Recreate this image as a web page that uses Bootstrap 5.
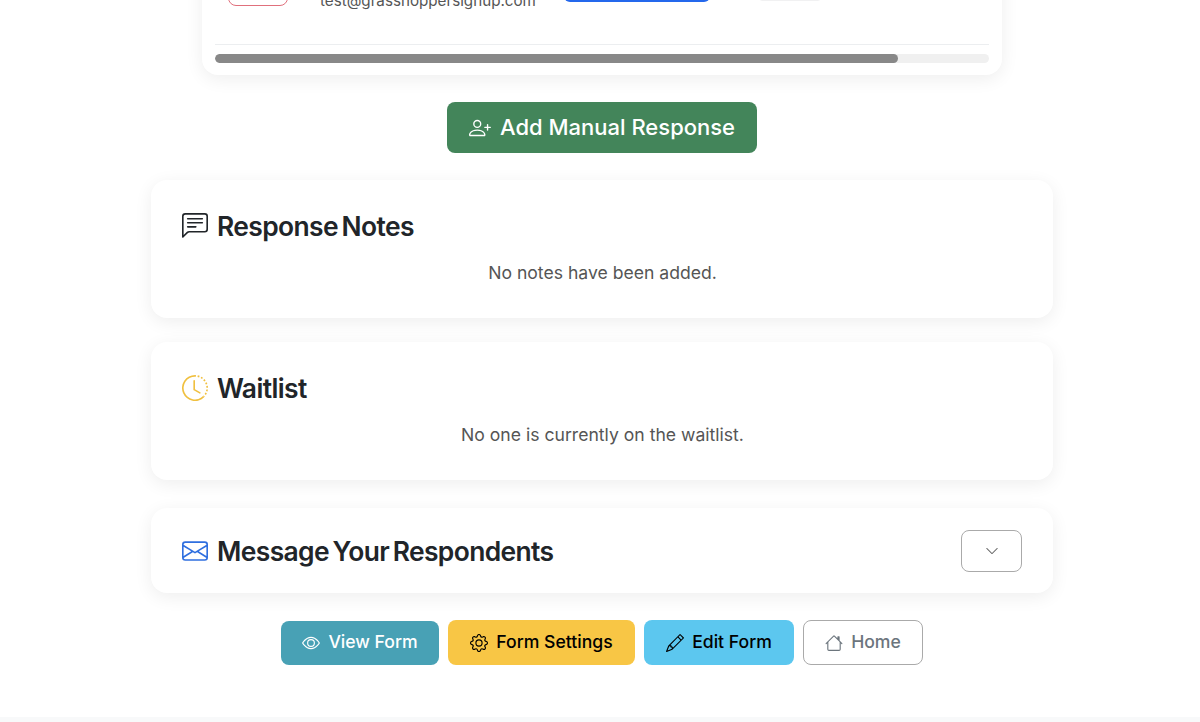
<!DOCTYPE html>
<html lang="en">
<head>
<meta charset="utf-8">
<title>Form responses</title>
<link href="https://cdn.jsdelivr.net/npm/bootstrap@5.3.0/dist/css/bootstrap.min.css" rel="stylesheet">
<style>
html,body{height:722px;overflow:hidden;background:#fff}
body{font-family:Inter,"Liberation Sans",sans-serif;color:#212529;padding-left:4px}
.page-wrap{width:902px;margin:0 auto;height:717px;display:flow-root}
.table-panel{width:800px;height:139px;margin:-64px auto 0;padding:0 13px 12px;border-radius:16px;background:#fff;box-shadow:0 4px 18px rgba(0,0,0,.07);overflow:hidden}
.row-cells{height:109px;border-bottom:1px solid #eceef0;padding:34px 0 0 13px}
.fake-action{width:60px;height:36px;border:1px solid #e0707c;border-radius:8px;flex:none}
.fake-mail{margin-left:32px;width:244px;font-size:15.2px;color:#555;line-height:62px;height:36px;white-space:nowrap}
.fake-pill{width:146px;height:32px;background:#2468ec;border-radius:6px;flex:none}
.fake-chip{width:66px;height:31px;background:#f1f1f2;border-radius:6px;margin-left:47px;flex:none}
.scroll-track{height:9px;margin-top:9px;background:#f0f0f0;border-radius:5px;overflow:hidden}
.scroll-thumb{height:100%;background:#888;border-radius:5px}
.add-btn{width:310px;height:51px;margin:27px auto;display:flex;align-items:center;justify-content:center;gap:9px;background:#43855a;border:0;border-radius:8px;color:#fff;font-size:22px;font-weight:500;padding:0}
.add-btn:hover{background:#43855a;color:#fff}
.info-panel{height:138px;padding:27px 30px 0 31px;margin-bottom:24px;border-radius:16px;background:#fff;box-shadow:0 4px 18px rgba(0,0,0,.07)}
.info-panel.wait-panel{margin-bottom:28px}
.info-panel.msg-panel{height:85px;padding:0 31px 0 31px;margin-bottom:27px}
.panel-title{font-family:Inter,sans-serif;font-size:26.4px;font-weight:600;letter-spacing:-.6px;word-spacing:-2.5px;line-height:38px;margin:0;color:#212529;gap:9px}
.panel-title svg{width:26px;height:26px;flex:none}
.panel-empty{margin:15px 0 0;text-align:center;font-size:17.6px;line-height:26px;color:#555}
.toggle-btn{width:61px;height:42px;padding:0;border:1px solid #aaa;border-radius:8px;background:#fff;color:#666;display:flex;align-items:center;justify-content:center}
.toggle-btn svg{width:14px;height:14px}
.foot-btns{gap:9px}
.act-btn{height:45px;display:flex;align-items:center;justify-content:center;gap:8px;border-radius:8px;font-size:17.6px;font-weight:500;padding:0;border:1px solid transparent}
.act-btn svg{width:18px;height:18px}
.act-view{width:158px;height:44px;align-self:center;background:#48a1b5;color:#fff}
.act-set{width:187px;background:#f8c645;color:#000}
.act-edit{width:150px;background:#5cc7ef;color:#000}
.act-home{width:120px;background:#fff;color:#6c757d;border-color:#aaa}
.page-foot{height:5px;background:#f8f9fa;margin-left:-4px}
</style>
</head>
<body>
<div class="page-wrap">
  <div class="table-panel">
    <div class="d-flex row-cells">
      <div class="fake-action"></div>
      <div class="fake-mail">test@grasshoppersignup.com</div>
      <div class="fake-pill"></div>
      <div class="fake-chip"></div>
    </div>
    <div class="scroll-track"><div class="scroll-thumb" style="width:88.2%"></div></div>
  </div>

  <button type="button" class="btn add-btn">
    <svg width="22" height="22" viewBox="0 0 16 16" fill="currentColor"><path d="M6 8a3 3 0 1 0 0-6 3 3 0 0 0 0 6zm2-3a2 2 0 1 1-4 0 2 2 0 0 1 4 0zm4 8c0 1-1 1-1 1H1s-1 0-1-1 1-4 6-4 6 3 6 4zm-1-.004c-.001-.246-.154-.986-.832-1.664C9.516 10.68 8.289 10 6 10c-2.29 0-3.516.68-4.168 1.332-.678.678-.83 1.418-.832 1.664h10z"/><path fill-rule="evenodd" d="M13.5 5a.5.5 0 0 1 .5.5V7h1.5a.5.5 0 0 1 0 1H14v1.5a.5.5 0 0 1-1 0V8h-1.5a.5.5 0 0 1 0-1H13V5.5a.5.5 0 0 1 .5-.5z"/></svg>
    Add Manual Response
  </button>

  <section class="info-panel">
    <h2 class="panel-title d-flex align-items-center">
      <svg viewBox="0 0 16 16" fill="#212529"><path d="M14 1a1 1 0 0 1 1 1v8a1 1 0 0 1-1 1H4.414A2 2 0 0 0 3 11.586l-2 2V2a1 1 0 0 1 1-1h12zM2 0a2 2 0 0 0-2 2v12.793a.5.5 0 0 0 .854.353l2.853-2.853A1 1 0 0 1 4.414 12H14a2 2 0 0 0 2-2V2a2 2 0 0 0-2-2H2z"/><path d="M3 3.5a.5.5 0 0 1 .5-.5h9a.5.5 0 0 1 0 1h-9a.5.5 0 0 1-.5-.5zM3 6a.5.5 0 0 1 .5-.5h9a.5.5 0 0 1 0 1h-9A.5.5 0 0 1 3 6zm0 2.5a.5.5 0 0 1 .5-.5h5a.5.5 0 0 1 0 1h-5a.5.5 0 0 1-.5-.5z"/></svg>
      Response Notes
    </h2>
    <p class="panel-empty">No notes have been added.</p>
  </section>

  <section class="info-panel wait-panel">
    <h2 class="panel-title d-flex align-items-center">
      <svg viewBox="0 0 16 16" fill="#f0c040"><path d="M8.515 1.019A7 7 0 0 0 8 1V0a8 8 0 0 1 .589.022l-.074.997zm2.004.45a7.003 7.003 0 0 0-.985-.299l.219-.976c.383.086.76.2 1.126.342l-.36.933zm1.37.71a7.01 7.01 0 0 0-.439-.27l.493-.87a8.025 8.025 0 0 1 .979.654l-.615.789a6.996 6.996 0 0 0-.418-.302zm1.834 1.79a6.99 6.99 0 0 0-.653-.796l.724-.69c.27.285.52.59.747.91l-.818.576zm.744 1.352a7.08 7.08 0 0 0-.214-.468l.893-.45a7.976 7.976 0 0 1 .45 1.088l-.95.313a7.023 7.023 0 0 0-.179-.483zm.53 2.507a6.991 6.991 0 0 0-.1-1.025l.985-.17c.067.386.106.778.116 1.17l-1 .025zm-.131 1.538c.033-.17.06-.339.081-.51l.993.123a7.957 7.957 0 0 1-.23 1.155l-.964-.267c.046-.165.086-.332.12-.501zm-.952 2.379c.184-.29.346-.594.486-.908l.914.405c-.16.36-.345.706-.555 1.038l-.845-.535zm-.964 1.205c.122-.122.239-.248.35-.378l.758.653a8.073 8.073 0 0 1-.401.432l-.707-.707z"/><path d="M8 1a7 7 0 1 0 4.95 11.95l.707.707A8.001 8.001 0 1 1 8 0v1z"/><path d="M7.5 3a.5.5 0 0 1 .5.5v5.21l3.248 1.856a.5.5 0 0 1-.496.868l-3.5-2A.5.5 0 0 1 7 9V3.5a.5.5 0 0 1 .5-.5z"/></svg>
      Waitlist
    </h2>
    <p class="panel-empty">No one is currently on the waitlist.</p>
  </section>

  <section class="info-panel msg-panel d-flex justify-content-between align-items-center">
    <h2 class="panel-title d-flex align-items-center">
      <svg viewBox="0 0 16 16" fill="#2f6fdf"><path d="M0 4a2 2 0 0 1 2-2h12a2 2 0 0 1 2 2v8a2 2 0 0 1-2 2H2a2 2 0 0 1-2-2V4Zm2-1a1 1 0 0 0-1 1v.217l7 4.2 7-4.2V4a1 1 0 0 0-1-1H2Zm13 2.383-4.708 2.825L15 11.105V5.383Zm-.034 6.876-5.64-3.471L8 9.583l-1.326-.795-5.64 3.47A1 1 0 0 0 2 13h12a1 1 0 0 0 .966-.741ZM1 11.105l4.708-2.897L1 5.383v5.722Z"/></svg>
      Message Your Respondents
    </h2>
    <button type="button" class="btn toggle-btn" aria-label="Expand">
      <svg viewBox="0 0 16 16" fill="currentColor"><path fill-rule="evenodd" d="M1.646 4.646a.5.5 0 0 1 .708 0L8 10.293l5.646-5.647a.5.5 0 0 1 .708.708l-6 6a.5.5 0 0 1-.708 0l-6-6a.5.5 0 0 1 0-.708z"/></svg>
    </button>
  </section>

  <div class="d-flex justify-content-center foot-btns">
    <a href="#" class="btn act-btn act-view"><svg viewBox="0 0 16 16" fill="currentColor"><path d="M16 8s-3-5.5-8-5.5S0 8 0 8s3 5.5 8 5.5S16 8 16 8zM1.173 8a13.133 13.133 0 0 1 1.66-2.043C4.12 4.668 5.88 3.5 8 3.5c2.12 0 3.879 1.168 5.168 2.457A13.133 13.133 0 0 1 14.828 8c-.058.087-.122.183-.195.288-.335.48-.83 1.12-1.465 1.755C11.879 11.332 10.119 12.5 8 12.5c-2.12 0-3.879-1.168-5.168-2.457A13.134 13.134 0 0 1 1.172 8z"/><path d="M8 5.5a2.5 2.5 0 1 0 0 5 2.5 2.5 0 0 0 0-5zM4.5 8a3.5 3.5 0 1 1 7 0 3.5 3.5 0 0 1-7 0z"/></svg>View Form</a>
    <a href="#" class="btn act-btn act-set"><svg viewBox="0 0 16 16" fill="currentColor"><path d="M8 4.754a3.246 3.246 0 1 0 0 6.492 3.246 3.246 0 0 0 0-6.492zM5.754 8a2.246 2.246 0 1 1 4.492 0 2.246 2.246 0 0 1-4.492 0z"/><path d="M9.796 1.343c-.527-1.79-3.065-1.79-3.592 0l-.094.319a.873.873 0 0 1-1.255.52l-.292-.16c-1.64-.892-3.433.902-2.54 2.541l.159.292a.873.873 0 0 1-.52 1.255l-.319.094c-1.79.527-1.79 3.065 0 3.592l.319.094a.873.873 0 0 1 .52 1.255l-.16.292c-.892 1.64.901 3.434 2.541 2.54l.292-.159a.873.873 0 0 1 1.255.52l.094.319c.527 1.79 3.065 1.79 3.592 0l.094-.319a.873.873 0 0 1 1.255-.52l.292.16c1.64.893 3.434-.902 2.54-2.541l-.159-.292a.873.873 0 0 1 .52-1.255l.319-.094c1.79-.527 1.79-3.065 0-3.592l-.319-.094a.873.873 0 0 1-.52-1.255l.16-.292c.893-1.64-.902-3.433-2.541-2.54l-.292.159a.873.873 0 0 1-1.255-.52l-.094-.319zm-2.633.283c.246-.835 1.428-.835 1.674 0l.094.319a1.873 1.873 0 0 0 2.693 1.115l.291-.16c.764-.415 1.6.42 1.184 1.185l-.159.292a1.873 1.873 0 0 0 1.116 2.692l.318.094c.835.246.835 1.428 0 1.674l-.319.094a1.873 1.873 0 0 0-1.115 2.693l.16.291c.415.764-.42 1.6-1.185 1.184l-.291-.159a1.873 1.873 0 0 0-2.693 1.116l-.094.318c-.246.835-1.428.835-1.674 0l-.094-.319a1.873 1.873 0 0 0-2.692-1.115l-.292.16c-.764.415-1.6-.42-1.184-1.185l.159-.291A1.873 1.873 0 0 0 1.945 8.93l-.319-.094c-.835-.246-.835-1.428 0-1.674l.319-.094A1.873 1.873 0 0 0 3.06 4.377l-.16-.292c-.415-.764.42-1.6 1.185-1.184l.292.159a1.873 1.873 0 0 0 2.692-1.115l.094-.319z"/></svg>Form Settings</a>
    <a href="#" class="btn act-btn act-edit"><svg viewBox="0 0 16 16" fill="currentColor"><path d="M12.146.146a.5.5 0 0 1 .708 0l3 3a.5.5 0 0 1 0 .708l-10 10a.5.5 0 0 1-.168.11l-5 2a.5.5 0 0 1-.65-.65l2-5a.5.5 0 0 1 .11-.168l10-10zM11.207 2.5 13.5 4.793 14.793 3.5 12.5 1.207 11.207 2.5zm1.586 3L10.5 3.207 4 9.707V10h.5a.5.5 0 0 1 .5.5v.5h.5a.5.5 0 0 1 .5.5v.5h.293l6.5-6.5zm-9.761 5.175-.106.106-1.528 3.821 3.821-1.528.106-.106A.5.5 0 0 1 5 12.5V12h-.5a.5.5 0 0 1-.5-.5V11h-.5a.5.5 0 0 1-.468-.325z"/></svg>Edit Form</a>
    <a href="#" class="btn act-btn act-home"><svg viewBox="0 0 16 16" fill="currentColor"><path d="M8.707 1.5a1 1 0 0 0-1.414 0L.646 8.146a.5.5 0 0 0 .708.708L2 8.207V13.5A1.5 1.5 0 0 0 3.5 15h9a1.5 1.5 0 0 0 1.5-1.5V8.207l.646.647a.5.5 0 0 0 .708-.708L13 5.793V2.5a.5.5 0 0 0-.5-.5h-1a.5.5 0 0 0-.5.5v1.293L8.707 1.5ZM13 7.207V13.5a.5.5 0 0 1-.5.5h-9a.5.5 0 0 1-.5-.5V7.207l5-5 5 5Z"/></svg>Home</a>
  </div>
</div>
<div class="page-foot"></div>
<script src="https://cdn.jsdelivr.net/npm/bootstrap@5.3.0/dist/js/bootstrap.bundle.min.js"></script>
</body>
</html>
